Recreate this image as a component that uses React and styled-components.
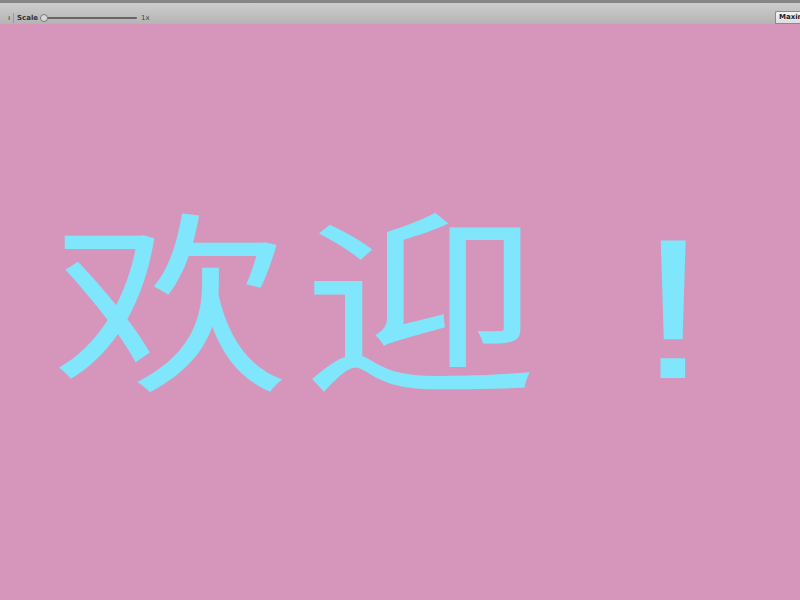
import React from "react";
import styled, { createGlobalStyle } from "styled-components";

const Global = createGlobalStyle`
  html, body { margin: 0; padding: 0; width: 800px; height: 600px; overflow: hidden; background: #d696bb; }
  #root { width: 800px; height: 600px; }
`;

const Page = styled.div`
  width: 800px;
  height: 600px;
  display: flex;
  flex-direction: column;
  background: #d696bb;
`;

const Toolbar = styled.div`
  height: 21px;
  border-top: 3px solid #858585;
  background: linear-gradient(#cdcdcd, #b4b4b4);
  display: flex;
  align-items: flex-end;
  font-family: "DejaVu Sans", sans-serif;
  font-size: 7px;
  font-weight: bold;
  color: #333;
`;

const Group = styled.div`
  display: flex;
  align-items: center;
  height: 12px;
`;

const Handle = styled.span`
  width: 3px;
  margin-left: 8px;
  font-size: 6px;
  color: #555;
  line-height: 1;
`;

const Sep = styled.span`
  width: 1px;
  height: 10px;
  background: #999;
  margin: 0 3px 0 2px;
`;

const Label = styled.span`
  margin-right: 4px;
`;

const Track = styled.div`
  position: relative;
  width: 95px;
  height: 2px;
  background: #666;
  border-radius: 1px;
`;

const Thumb = styled.div`
  position: absolute;
  left: -2px;
  top: -3px;
  width: 6px;
  height: 6px;
  border-radius: 50%;
  background: #d8d8d8;
  border: 1px solid #777;
`;

const Value = styled.span`
  margin-left: 4px;
  font-weight: normal;
  color: #444;
`;

const Spacer = styled.div`
  flex: 1;
`;

const MaxButton = styled.div`
  height: 11px;
  padding: 0 0 0 3px;
  width: 21px;
  overflow: hidden;
  white-space: nowrap;
  background: linear-gradient(#f4f4f4, #dedede);
  border: 1px solid #8a8a8a;
  border-right: none;
  border-radius: 2px 0 0 0;
  line-height: 11px;
  color: #222;
`;

const Stage = styled.div`
  flex: 1;
  display: flex;
  align-items: flex-start;
  background: #d696bb;
`;

const Greeting = styled.div`
  margin-top: 171px;
  margin-left: 53px;
  display: flex;
  align-items: flex-start;
  color: #80e6fc;
  white-space: nowrap;
`;

const Han = styled.span`
  font-family: "Noto Sans CJK SC", sans-serif;
  font-size: 236px;
  line-height: 1;
  letter-spacing: 14px;
  transform: scaleY(0.82);
  transform-origin: top left;
`;

const Bang = styled.span`
  font-family: "Liberation Sans", sans-serif;
  font-size: 200px;
  line-height: 1;
  margin-left: 84px;
  margin-top: 14px;
  transform: scaleX(1.3);
  transform-origin: top left;
`;

export default function App() {
  return (
    <>
      <Global />
      <Page>
        <Toolbar>
          <Group>
            <Handle>⁞</Handle>
            <Sep />
            <Label>Scale</Label>
            <Track>
              <Thumb />
            </Track>
            <Value>1x</Value>
          </Group>
          <Spacer />
          <MaxButton>Maximize on Play</MaxButton>
        </Toolbar>
        <Stage>
          <Greeting>
            <Han>欢迎</Han>
            <Bang>!</Bang>
          </Greeting>
        </Stage>
      </Page>
    </>
  );
}
